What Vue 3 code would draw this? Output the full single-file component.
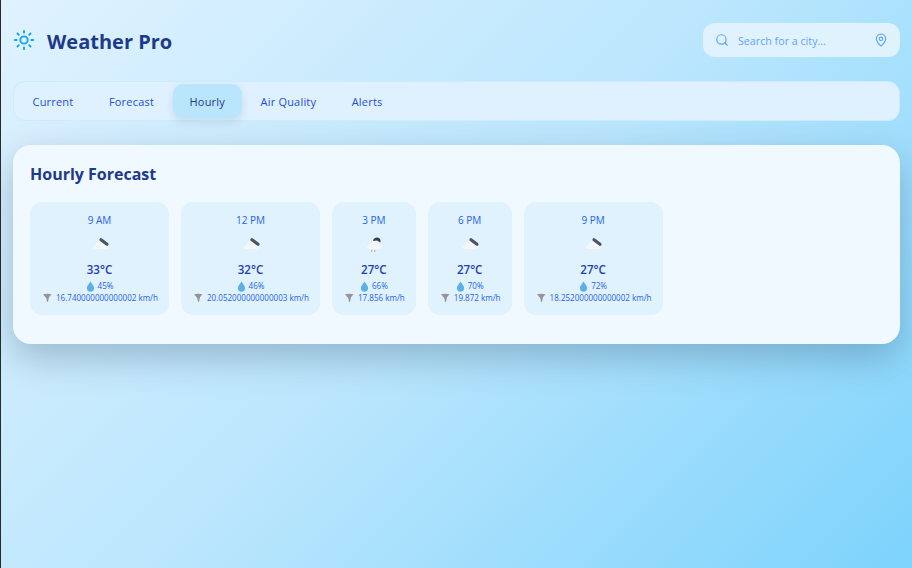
<script setup>
import { ref } from 'vue'

const tabs = ['Current', 'Forecast', 'Hourly', 'Air Quality', 'Alerts']
const activeTab = ref('Hourly')

const hours = [
  { time: '9 AM', temp: '33°C', rain: '45%', wind: '16.740000000000002 km/h', icon: 'bar' },
  { time: '12 PM', temp: '32°C', rain: '46%', wind: '20.052000000000003 km/h', icon: 'bar' },
  { time: '3 PM', temp: '27°C', rain: '66%', wind: '17.856 km/h', icon: 'rain' },
  { time: '6 PM', temp: '27°C', rain: '70%', wind: '19.872 km/h', icon: 'bar' },
  { time: '9 PM', temp: '27°C', rain: '72%', wind: '18.252000000000002 km/h', icon: 'bar' },
]
</script>

<template>
  <div class="page">
    <header class="header">
      <div class="brand">
        <svg class="sun" viewBox="0 0 24 24" fill="none" stroke="#0ea5e9" stroke-width="2" stroke-linecap="round">
          <circle cx="12" cy="12" r="4" />
          <path d="M12 2v2M12 20v2M4.9 4.9l1.4 1.4M17.7 17.7l1.4 1.4M2 12h2M20 12h2M6.3 17.7l-1.4 1.4M19.1 4.9l-1.4 1.4" />
        </svg>
        <h1>Weather Pro</h1>
      </div>
      <div class="search">
        <svg class="search-icon" viewBox="0 0 24 24" fill="none" stroke="#60a5fa" stroke-width="2" stroke-linecap="round">
          <circle cx="11" cy="11" r="8" />
          <path d="M21 21l-4.3-4.3" />
        </svg>
        <span class="placeholder">Search for a city...</span>
        <svg class="pin-icon" viewBox="0 0 24 24" fill="none" stroke="#60a5fa" stroke-width="2" stroke-linecap="round" stroke-linejoin="round">
          <path d="M20 10c0 5-5.5 10.200-7.400 11.800a1 1 0 0 1-1.200 0C9.500 20.200 4 15 4 10a8 8 0 0 1 16 0" />
          <circle cx="12" cy="10" r="3" />
        </svg>
      </div>
    </header>

    <nav class="tabs">
      <button v-for="tab in tabs" :key="tab" class="tab" :class="{ active: tab === activeTab }" @click="activeTab = tab">
        {{ tab }}
      </button>
    </nav>

    <section class="card">
      <h2>Hourly Forecast</h2>
      <div class="hours">
        <div v-for="hour in hours" :key="hour.time" class="hour">
          <div class="time">{{ hour.time }}</div>
          <svg class="weather" viewBox="0 0 20 16">
            <path transform="translate(1.400 1) scale(.88)" d="M4 13.500c-1.800 0-2.700-.9-2.500-2 .2-1 1.200-1.500 2.300-1.500C5 7 7 4.500 10 4.200c2-.2 3.600.6 4.600 2 1.300.7 2 2 2.200 3.500 1.200.1 2 .8 2 1.800 0 1-.8 2-2 2z" fill="#f5f6f7" />
            <path v-if="hour.icon === 'bar'" d="M11 3.800l6 4.500" stroke="#4b5563" stroke-width="3.200" stroke-linecap="round" />
            <template v-else>
              <path d="M9 5a4 4 0 0 1 5.500-3.300c1.800.7 2.500 2.800 1.700 4.800L13 4.500z" fill="#374151" />
              <path d="M8 14l-.5 2M11 14l-.5 2" stroke="#a3afbd" stroke-width="1" />
            </template>
          </svg>
          <div class="temp">{{ hour.temp }}</div>
          <div class="detail">
            <svg class="drop" viewBox="0 0 10 12">
              <path d="M5 .5C3.800 2.800 1 5.200 1 7.800A4 4 0 0 0 9 7.800C9 5.200 6.200 2.800 5 .5z" fill="#5cb0ea" />
            </svg>
            <span>{{ hour.rain }}</span>
          </div>
          <div class="detail wind">
            <svg class="tornado" viewBox="0 0 12 10">
              <path d="M2 1.200c2-.7 6-.7 8.500 0L8 4.300 7 8.800H6L5.200 5z" fill="#96949a" />
            </svg>
            <span>{{ hour.wind }}</span>
          </div>
        </div>
      </div>
    </section>
  </div>
</template>

<style>
html,
body {
  margin: 0;
  height: 100%;
}
</style>

<style scoped>
.page {
  box-sizing: border-box;
  width: 912px;
  height: 568px;
  overflow: hidden;
  border-left: 1px solid #2a2a2a;
  padding: 23px 12px 0;
  background: linear-gradient(135deg, #e0f2fe 0%, #bae6fd 50%, #7dd3fc 100%);
  font-family: "Open Sans", "Noto Sans", sans-serif;
}

.header {
  display: flex;
  justify-content: space-between;
  align-items: center;
  height: 34px;
  margin-bottom: 24px;
}

.brand {
  display: flex;
  align-items: center;
  gap: 12px;
}

.sun {
  width: 22px;
  height: 22px;
}

h1 {
  margin: 2px 0 0;
  font-size: 20px;
  font-weight: 700;
  color: #1e3a8a;
}

.search {
  box-sizing: border-box;
  width: 197px;
  height: 34px;
  display: flex;
  align-items: center;
  padding: 0 12px;
  border-radius: 12px;
  background: #e0f2fe;
}

.search-icon {
  width: 14px;
  height: 14px;
  margin-right: 9px;
}

.placeholder {
  flex: 1;
  margin-top: 2px;
  font-size: 10.700px;
  color: #60a5fa;
}

.pin-icon {
  width: 14px;
  height: 14px;
}

.tabs {
  box-sizing: border-box;
  height: 40px;
  display: flex;
  align-items: center;
  gap: 2.500px;
  padding: 0 2px;
  border: 1px solid #cdebfe;
  border-radius: 12px;
  background: #dff1fe;
  margin-bottom: 24px;
}

.tab {
  height: 34px;
  padding: 0 16.500px;
  border: none;
  border-radius: 10px;
  background: transparent;
  font-family: inherit;
  font-size: 11px;
  font-weight: 500;
  letter-spacing: 0.2px;
  color: #1d4ed8;
  cursor: pointer;
}

.tab.active {
  background: #bae6fd;
  color: #1e3a8a;
  box-shadow: 0 4px 8px rgba(30, 64, 100, 0.12);
}

.card {
  box-sizing: border-box;
  height: 199px;
  padding: 17px;
  border-radius: 18px;
  background: #f0f9ff;
  box-shadow: 0 14px 36px rgba(40, 70, 100, 0.3);
}

h2 {
  margin: 0 0 16px;
  font-size: 16px;
  line-height: 24px;
  font-weight: 700;
  color: #1e3a8a;
}

.hours {
  display: flex;
  gap: 12px;
}

.hour {
  display: flex;
  flex-direction: column;
  align-items: center;
  padding: 11px;
  border-radius: 12px;
  background: #e0f2fe;
  height: 113px;
  box-sizing: border-box;
}

.time {
  font-size: 10px;
  line-height: 14px;
  color: #2563eb;
}

.weather {
  width: 20px;
  height: 16px;
  margin: 9px 0 10px;
}

.temp {
  font-size: 11.600px;
  line-height: 16px;
  font-weight: 600;
  color: #1e40af;
}

.detail {
  display: flex;
  align-items: center;
  gap: 3px;
  font-size: 8.050px;
  line-height: 12px;
  color: #2563eb;
  margin-top: 2px;
}

.wind {
  margin-top: 0;
}

.drop {
  width: 9px;
  height: 11px;
}

.tornado {
  width: 12px;
  height: 10px;
}
</style>
